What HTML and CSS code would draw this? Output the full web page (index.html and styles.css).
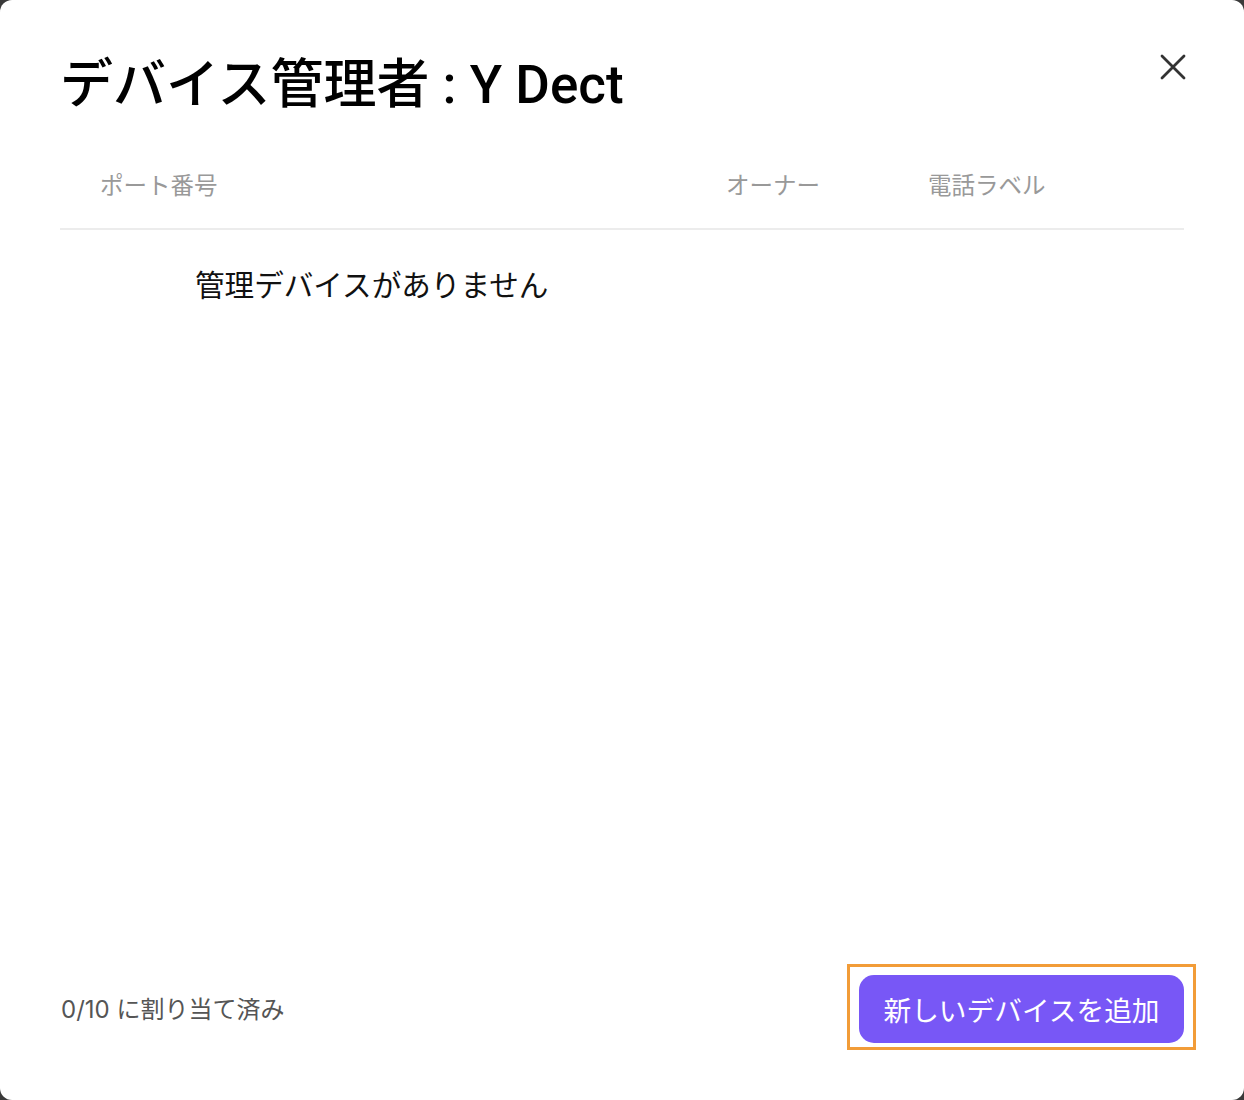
FILE: index.html
```html
<!DOCTYPE html>
<html lang="ja">
<head>
<meta charset="utf-8">
<title>デバイス管理者</title>
<link rel="stylesheet" href="styles.css">
</head>
<body>
<div class="modal">
  <header class="modal-head">
    <h1 class="title">デバイス管理者 : Y Dect</h1>
    <button class="close" aria-label="閉じる">
      <svg width="26" height="26" viewBox="0 0 26 26"><path d="M2 2 L24 24 M24 2 L2 24" stroke="#333" stroke-width="2.8" stroke-linecap="round" fill="none"/></svg>
    </button>
  </header>
  <div class="table-head">
    <div class="th">ポート番号</div>
    <div class="th">オーナー</div>
    <div class="th">電話ラベル</div>
  </div>
  <div class="table-body">
    <p class="empty">管理デバイスがありません</p>
  </div>
  <footer class="modal-foot">
    <span class="count">0/10 に割り当て済み</span>
    <span class="highlight"><button class="primary">新しいデバイスを追加</button></span>
  </footer>
</div>
</body>
</html>
```
FILE: styles.css
```css
* { box-sizing: border-box; }
html, body { margin: 0; padding: 0; }
body {
  background: #3a3a3a;
  font-family: Inter, "Noto Sans CJK JP", sans-serif;
  width: 1244px;
  height: 1100px;
  overflow: hidden;
}
.modal {
  width: 1244px;
  height: 1100px;
  background: #fff;
  border-radius: 12px;
  padding: 0 60px 0 60px;
  display: flex;
  flex-direction: column;
}
.modal-head {
  display: flex;
  justify-content: space-between;
  align-items: flex-start;
  padding-top: 51px;
}
.title {
  margin: 0;
  font-family: Roboto, "Noto Sans CJK JP", sans-serif;
  font-size: 53px;
  font-weight: 500;
  line-height: 68px;
  color: #000;
}
.close {
  border: 0;
  background: none;
  padding: 0;
  margin: 3px -2px 0 0;
  width: 26px;
  height: 26px;
  cursor: pointer;
  display: flex;
}
.table-head {
  display: grid;
  grid-template-columns: 626px 202px 1fr;
  padding: 0 0 22px 40px;
  margin-top: 43px;
  height: 68px;
  align-items: center;
  border-bottom: 2px solid #ececec;
}
.th {
  font-size: 23.5px;
  color: #999;
  font-weight: 400;
}
.table-body {
  flex: 1;
}
.empty {
  margin: 35px 0 0 135px;
  font-size: 29.6px;
  line-height: 40px;
  color: #111;
}
.modal-foot {
  display: flex;
  justify-content: space-between;
  align-items: center;
  margin-right: -12px;
  padding-bottom: 50px;
}
.count {
  font-size: 24px;
  color: #555;
  padding-left: 1px;
}
.highlight {
  display: inline-flex;
  border: 3px solid #f29c38;
  padding: 8px 9px 4px 9px;
}
.primary {
  border: 0;
  background: #7857f6;
  color: #fff;
  font-family: Inter, "Noto Sans CJK JP", sans-serif;
  font-size: 27.7px;
  height: 68px;
  width: 325px;
  border-radius: 15px;
  padding: 0;
  cursor: pointer;
}
```
